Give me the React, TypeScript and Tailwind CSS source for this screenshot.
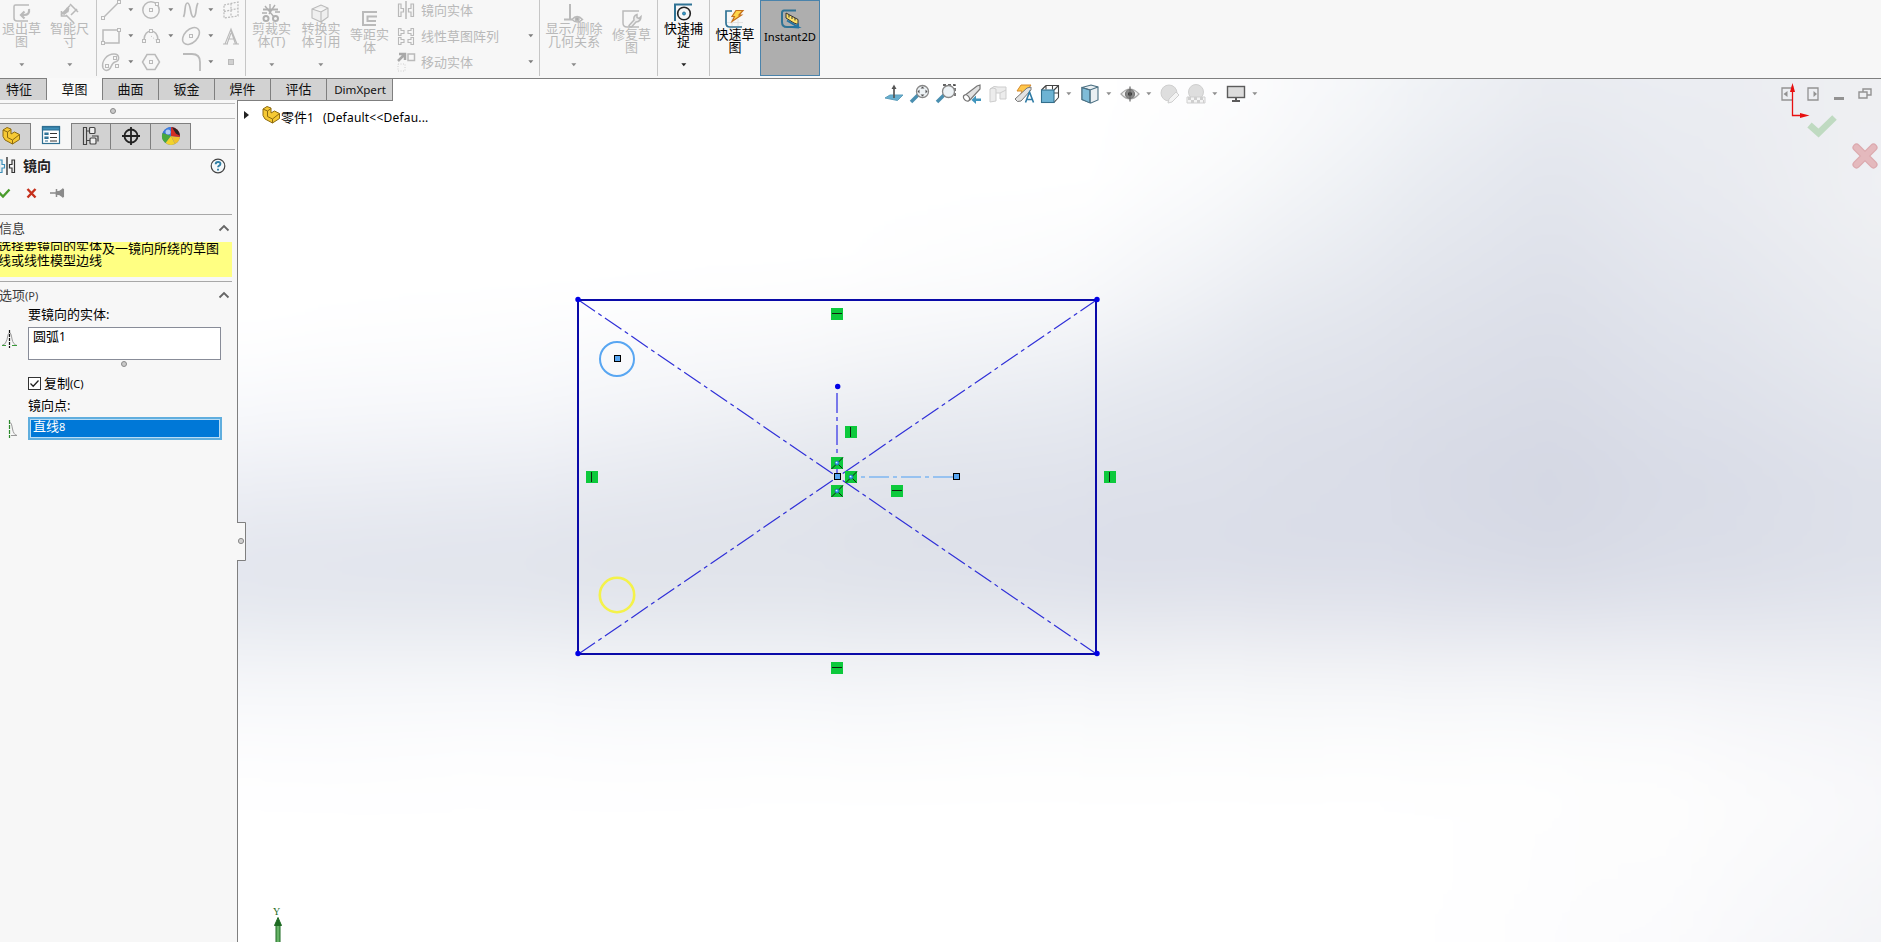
import React from "react";

type Kids = { children?: React.ReactNode };

const Ic = ({ children, w = 20, h = 20, c = "#bababa", sw = 1.5, cls = "" }: Kids & { w?: number; h?: number; c?: string; sw?: number; cls?: string }) => (
  <svg width={w} height={h} viewBox={`0 0 ${w} ${h}`} fill="none" stroke={c} strokeWidth={sw} className={`block shrink-0 overflow-visible ${cls}`}>
    {children}
  </svg>
);

const Arrow = ({ c = "#7d7d7d" }: { c?: string }) => (
  <svg width="6" height="4" viewBox="0 0 6 4" className="block shrink-0">
    <path d="M0.3 0.3h5L2.8 3.3z" fill={c} />
  </svg>
);

const Node = ({ x, y }: { x: number; y: number }) => (
  <rect x={x - 1.5} y={y - 1.5} width="3" height="3" fill="#f7f7f7" strokeWidth="1" />
);

const ExitIcon = () => (
  <Ic><path d="M18 2H4.500q-1.500 0-1.500 1.500v11.500q0 3 3 3H17" /><path d="M18 6q1 6-5 6H10M13.500 8.500L10 12l3.500 3.500" strokeWidth="2.200" /></Ic>
);
const DimIcon = () => (
  <Ic><path d="M2 12L11 2.500M11 1l8 8M7 12l8 8M12 12l6-6M2.500 8v5h5" strokeWidth="1.600" /><path d="M4 11l4-3M9 5l-1 4" strokeWidth="3" /></Ic>
);
const LineIcon = () => <Ic><path d="M3 17L17 3" /><Node x={2} y={18} /><Node x={18} y={2} /></Ic>;
const CircleIcon = () => <Ic><circle cx="10" cy="10" r="8.200" /><Node x={10} y={10} /><Node x={16} y={4} /></Ic>;
const SplineIcon = () => <Ic sw={1.700}><path d="M2.500 17C5 12 3 3 6.500 3S9 17 12.500 17 14 8 17 3" /></Ic>;
const PlaneIcon = () => <Ic sw={1.200}><path d="M3 5l14-3v14L3 18zM10 3.500v13M3 11.500l14-3" strokeDasharray="2 1.300" /></Ic>;
const RectIcon = () => <Ic><rect x="2" y="4" width="16" height="13" /><Node x={2} y={17} /><Node x={18} y={4} /></Ic>;
const ArcIcon = () => <Ic><path d="M3 14C3 2 17 2 17 14" /><path d="M10 10l6 5" strokeDasharray="1 2" strokeWidth="1" /><Node x={3} y={15} /><Node x={17} y={15} /><Node x={10} y={5} /></Ic>;
const EllipseIcon = () => <Ic><ellipse cx="10" cy="10" rx="10" ry="6.500" transform="rotate(-45 10 10)" /><Node x={10} y={10} /></Ic>;
const LetterIcon = () => <Ic sw={1.100}><path d="M2 18h5M12 18h6M4 18l6-15 6 15M10 7l-4 11M7 13h6M10 3v2l4.500 13" /></Ic>;
const SlotIcon = () => <Ic><path d="M2 16C0 9 6 2 13 2c6 0 6 7 1 8-4 1-4 8-7 8-2 1-4 0-5-2z" /><Node x={6} y={14} /><Node x={14} y={6} /><Node x={16} y={14} /></Ic>;
const HexIcon = () => <Ic><path d="M6 2.500h8L18.500 10 14 17.500H6L1.500 10z" /><Node x={10} y={10} /></Ic>;
const FilletIcon = () => <Ic sw={1.800}><path d="M2 2h9q8 0 8 8v9" /></Ic>;
const PointIcon = () => <Ic><rect x="7.500" y="7.500" width="5" height="5" fill="#d0d0d0" strokeWidth="1" /></Ic>;
const TrimIcon = () => (
  <Ic c="#b0b0b0" sw={1.400}><path d="M1 10h5M14 9h5M9 1v8M14 2l-6 9M4 3l9 11" /><circle cx="5" cy="15.500" r="2.500" strokeWidth="2" /><circle cx="14.500" cy="15.500" r="2.500" strokeWidth="2" /><path d="M2 6.500h15" strokeWidth="2" /></Ic>
);
const CubeIcon = () => <Ic sw={1.100}><path d="M2 6l9-4 7 3v9l-7 5-9-4zM2 6l9 3 7-4M11 9v10" fill="#efefef" /></Ic>;
const OffsetIcon = () => <Ic sw={2}><path d="M18 3H4v13h13M18 7.500H8.500V12h8.500" /></Ic>;
const MirrorIcon = ({ c = "#b9b9b9", l = "#b9b9b9", m = "#a8a8a8" }) => (
  <Ic c={c} sw={1.200}><path d="M2.500 4h2.500v4.500h2.500v3.500h-2.500v4.500H2.500z" stroke={l} /><path d="M17.500 4h-2.500v4.500h-2.500v3.500h2.500v4.500h2.500z" /><path d="M10 1v18" stroke={m} strokeWidth="1.200" /></Ic>
);
const PatternIcon = () => (
  <Ic sw={1.100}>
    <path d="M2.500 2.500h2.500v2h3v3h-3v2h-2.500zM17.500 2.500h-2.500v2h-3v3h3v2h2.500zM2.500 11.500h2.500v2h3v3h-3v2h-2.500zM17.500 11.500h-2.500v2h-3v3h3v2h2.500z" />
  </Ic>
);
const MoveIcon = () => (
  <Ic sw={1.500}><path d="M2 9l6-6M3 2h6v6" strokeWidth="2.500" stroke="#a9a9a9" /><rect x="12" y="2" width="6.500" height="6.500" /><path d="M2 12h7v7H2z" strokeDasharray="1 1.500" strokeWidth="1" stroke="#d0d0d0" /></Ic>
);
const RelationIcon = () => (
  <Ic sw={1.500}><path d="M7 1v15M1 16.500h8" strokeWidth="2" /><path d="M9 16.500q5-6 10.500 0-5.500 5-10.500 0z" fill="#f7f7f7" /><circle cx="14.200" cy="16" r="1.800" fill="#aaa" /></Ic>
);
const RepairIcon = () => (
  <Ic sw={1.500}><path d="M18 2H2v12q0 4 4 4h12" /><path d="M8 16.500l5-5.500q-1-4 3-5.500v3l2 1 2-2q0 5-5 5.500l-4.500 5q-2.500 0-2.500-1.500z" fill="#eee" /></Ic>
);
const SnapIcon = () => (
  <Ic c="#2f7395" sw={2}><path d="M2 18V1.500H19" /><circle cx="11" cy="10.500" r="6.300" stroke="#222" strokeWidth="1.600" /><circle cx="11" cy="10.500" r="1.500" fill="#2f9bd0" strokeWidth="1" /></Ic>
);
const RapidIcon = () => (
  <Ic c="#2f7395" sw={1.700}><path d="M8 8v12M14 10v10M3 13.500h16" stroke="#ddd" strokeWidth=".8" /><path d="M8 2H2v12q0 4 4 4h12" /><path d="M12 1.500h7l-4 4.500h2.500L8 12.500l2.500-5H8z" fill="#ffd54a" stroke="#c5701c" strokeWidth="1.200" /></Ic>
);
const InstantIcon = () => (
  <Ic c="#2f7395" sw={2}><path d="M16 1.500H4Q2 1.500 2 4v9q0 5 5 5h5" /><path d="M6 4l12 6.500v5l-4-1.500-8-5z" fill="#ffe266" stroke="#333" strokeWidth="1" /><path d="M9 6v2.500M12 7.500v2.500M15 9v2.500" stroke="#333" strokeWidth="1" /><path d="M7 11.500l11 6.500h-6l6 .5v-4" stroke="#2474a0" /></Ic>
);

const Big = ({ icon, a, b, arrow, low, dark, cls }: { icon: React.ReactNode; a: string; b: string; arrow?: boolean; low?: boolean; dark?: boolean; cls: string }) => (
  <div className={`flex h-[76px] shrink-0 flex-col items-center ${low ? "pt-[9px]" : "pt-[3px]"} ${dark ? "text-black" : "text-[#b9b9b9]"} ${cls}`}>
    <div className="-ml-[2px]">{icon}</div>
    <div className="-mt-px flex flex-col items-center whitespace-nowrap text-[13px] leading-[13px]">
      <span>{a}</span>
      <span>{b}</span>
    </div>
    {arrow && <div className="mt-[15px]"><Arrow c={dark ? "#222" : "#8a8a8a"} /></div>}
  </div>
);

const Sep = () => <div className="h-[76px] w-px shrink-0 bg-[#c6c6c6]" />;

const sketchTools = [
  [LineIcon, true], [CircleIcon, true], [SplineIcon, true], [PlaneIcon, false],
  [RectIcon, true], [ArcIcon, true], [EllipseIcon, true], [LetterIcon, false],
  [SlotIcon, true], [HexIcon, false], [FilletIcon, true], [PointIcon, false],
] as [React.FC, boolean][];

const ListRow = ({ icon, label, arrow }: { icon: React.ReactNode; label: string; arrow?: boolean }) => (
  <div className="flex h-[26px] items-center text-[13px] text-[#b9b9b9]">
    {icon}
    <span className="ml-[5px] flex-1 whitespace-nowrap leading-none">{label}</span>
    {arrow && <Arrow />}
  </div>
);

const Ribbon = () => (
  <header className="flex h-[79px] shrink-0 items-start border-b border-[#7f7f7f] bg-[#f7f7f7]">
    <Big icon={<ExitIcon />} a="退出草" b="图" arrow cls="w-[43px]" />
    <Big icon={<DimIcon />} a="智能尺" b="寸" arrow cls="w-[53px]" />
    <Sep />
    <div className="-mt-[3px] grid w-[148px] shrink-0 grid-cols-[40px_40px_40px_28px] grid-rows-[26px_26px_26px] pl-[4px]">
      {sketchTools.map(([I, arrow], i) => (
        <div key={i} className="flex items-center gap-[7px]"><I />{arrow && <Arrow />}</div>
      ))}
    </div>
    <Sep />
    <Big icon={<TrimIcon />} a="剪裁实" b="体(T)" arrow cls="w-[51px]" />
    <Big icon={<CubeIcon />} a="转换实" b="体引用" arrow cls="w-[48px]" />
    <Big icon={<OffsetIcon />} a="等距实" b="体" low cls="w-[49px]" />
    <div className="-mt-[3px] flex w-[145px] shrink-0 flex-col pl-[2px] pr-[5px]">
      <ListRow icon={<MirrorIcon />} label="镜向实体" />
      <ListRow icon={<PatternIcon />} label="线性草图阵列" arrow />
      <ListRow icon={<MoveIcon />} label="移动实体" arrow />
    </div>
    <Sep />
    <Big icon={<RelationIcon />} a="显示/删除" b="几何关系" arrow cls="w-[68px]" />
    <Big icon={<RepairIcon />} a="修复草" b="图" low cls="w-[49px] pr-[2px]" />
    <Sep />
    <Big icon={<SnapIcon />} a="快速捕" b="捉" arrow dark cls="w-[51px]" />
    <Sep />
    <Big icon={<RapidIcon />} a="快速草" b="图" low dark cls="w-[50px]" />
    <div className="flex h-[76px] w-[60px] shrink-0 flex-col items-center border border-[#4a83ab] bg-[#aeaeae] pt-[8px] text-[11.200px] text-black">
      <InstantIcon />
      <span className="mt-px leading-[13px]">Instant2D</span>
    </div>
  </header>
);

const tabs = [
  ["特征", "w-[47px] pr-[8px]", false], ["草图", "w-[56px]", true], ["曲面", "w-[56px]", false], ["钣金", "w-[56px]", false],
  ["焊件", "w-[56px]", false], ["评估", "w-[56px]", false], ["DimXpert", "w-[66px] pl-[1px]", false],
] as [string, string, boolean][];

const TabStrip = () => (
  <nav className="-mt-px flex h-[23px] shrink-0">
    {tabs.map(([t, w, on]) => (
      <div key={t} className={`flex shrink-0 items-center justify-center border-r border-[#7f7f7f] leading-none ${t === "DimXpert" ? "text-[11.600px]" : "text-[13px]"} ${w} ${on ? "bg-[#f9f9f9]" : "border-y bg-[#d2d2d2]"} text-[#111]`}>{t}</div>
    ))}
  </nav>
);

const PartIcon = () => (
  <Ic c="#8d6b10" sw={1}><path d="M2 4l4-2.500 4 1.500v5l3.500-2 5 2.500v5L11.500 18 4 14 2 10.500z" fill="#f6c934" strokeLinejoin="round" /><path d="M2 4l4.500 2L10 3.500M6.500 6v5.500l5 2.500 7-5.500M11.500 14v4" /></Ic>
);
const PropIcon = () => (
  <Ic c="#2e6f92" sw={1.200}><rect x="1.500" y="1.500" width="17" height="17" fill="#fff" /><path d="M1.500 2h17v3h-17z" fill="#3d8fb8" /><path d="M4 8h3v1.500H4zM4 12h3v1.500H4zM4 16h3" fill="#3d8fb8" /><path d="M9 8.500h7M9 12.500h7M9 16h7" stroke="#333" /></Ic>
);
const ConfigIcon = () => (
  <Ic c="#444" sw={1.200}><path d="M2.500 1.500h3v17h-3zM5.500 5h3M5.500 14.500h4" fill="#ddd" /><rect x="8.500" y="1.500" width="5.500" height="6" rx="1" fill="#eee" /><rect x="9" y="12" width="6" height="6" rx="1" fill="#eee" /><path d="M11 10h6v5.500" /></Ic>
);
const TargetIcon = () => <Ic c="#222" sw={1.800}><circle cx="10" cy="10" r="6.500" /><path d="M10 1v18M1 10h18" /></Ic>;
const BallIcon = () => (
  <Ic sw={0}><circle cx="10" cy="10" r="9" fill="#3b6fd0" /><path d="M10 10L2 6A9 9 0 0 1 12 1.200z" fill="#3f7ddd" /><path d="M10 10L1.500 7a9 9 0 0 0 3 10z" fill="#49a83c" /><path d="M10 10L4.500 17A9 9 0 0 0 14 18z" fill="#f2d32c" /><path d="M10 10l4 8a9 9 0 0 0 5-7z" fill="#f0c02c" /><path d="M10 10l9 1A9 9 0 0 0 10 1z" fill="#d32d24" /><path d="M11 1.200q7 1 8 8.500l-4-2z" fill="#2b2424" /><circle cx="7" cy="6" r="2.500" fill="#fff" opacity=".6" /></Ic>
);

const MTab = ({ children, cls }: Kids & { cls: string }) => (
  <div className={`flex h-[26px] items-center justify-center border-[#7f7f7f] pb-[2px] ${cls}`}>{children}</div>
);

const Dot = () => <div className="size-[6px] rounded-full border border-[#8a8a8a] bg-[#c9c9c9]" />;

const Chevron = () => <Ic w={12} h={8} c="#666" sw={1.800} cls="-mt-px"><path d="M1.500 6.500L6 2l4.500 4.500" /></Ic>;

const BellIcon = () => (
  <Ic w={16} h={18} c="#999" sw={1}><path d="M0 15.500q4-1 5-6Q6 3 7.500 2.500" /><path d="M7.500 2.500q1.500 0 2.500 6.500 1 5.500 5 6.500" /><path d="M7.500 0v18" stroke="#111" strokeWidth="1.200" strokeDasharray="3 1" /><path d="M0 15.500h4M10 15.500h5" stroke="#3a9a3a" /></Ic>
);
const HalfBellIcon = () => (
  <Ic w={16} h={18} c="#999" sw={1}><path d="M7.500 0v18" stroke="#2a8a2a" strokeWidth="1.200" strokeDasharray="4 1" /><path d="M8 2.500q1.500 0 2.500 6.500 1 5.500 4.500 6.500H9" /></Ic>
);

const PropertyPanel = () => (
  <aside className="flex w-[238px] shrink-0 flex-col border-r border-[#7f7f7f] bg-[#f7f7f7] text-[13px] text-black">
    <div className="mr-[2px] mt-[3px] flex h-[16px] items-center justify-center border-y border-[#bdbdbd] pr-[9px]"><Dot /></div>
    <div className="mr-[2px] mt-[4px] flex border-b border-[#a8a8a8]">
      <MTab cls="w-[31px] border-r border-t bg-[#d2d2d2] pr-[8px]"><PartIcon /></MTab>
      <MTab cls="w-[40px] bg-[#f7f7f7] -mb-px"><PropIcon /></MTab>
      <MTab cls="w-[40px] border-x border-t bg-[#d2d2d2]"><ConfigIcon /></MTab>
      <MTab cls="w-[40px] border-r border-t bg-[#d2d2d2]"><TargetIcon /></MTab>
      <MTab cls="w-[40px] border-r border-t bg-[#d2d2d2]"><BallIcon /></MTab>
    </div>
    <div className="flex h-[33px] items-center pb-[2px]">
      <div className="-ml-[3px]"><MirrorIcon c="#333" l="#3d8fb8" m="#111" /></div>
      <h2 className="ml-[6px] flex-1 text-[14px] font-bold leading-none text-[#222]">镜向</h2>
      <Ic w={16} h={16} c="#444" sw={1.200} cls="mr-[11px] mt-px"><circle cx="8" cy="8" r="6.800" fill="#f4f8fa" /><path d="M5.700 6.300q0-2.300 2.400-2.300t2.300 2q0 1.200-1.500 1.900-.8.400-.8 1.400" stroke="#2f7fa5" strokeWidth="1.900" /><path d="M8 10.700v1.700" stroke="#2f7fa5" strokeWidth="1.900" /></Ic>
    </div>
    <div className="mr-[5px] flex h-[32px] items-center border-b border-[#a8a8a8] pb-[11px]">
      <Ic w={10} h={10} c="#4a9c2d" sw={2.400}><path d="M-1 4.500l4 4L9.500 1.500" /></Ic>
      <Ic w={10} h={10} c="#c6301c" sw={2.400} cls="ml-[17px]"><path d="M.5 1l8 8.500M8.500 1l-8 8.500" /></Ic>
      <Ic w={14} h={10} c="#8b8b8b" sw={1.500} cls="ml-[13px]"><path d="M0 5h6M6.500 1v8" /><path d="M6.500 4Q10 4 12.500 1.500v7Q10 6 6.500 6z" fill="#8b8b8b" /><path d="M13.300 1v8" /></Ic>
    </div>
    <div className="mr-[5px] flex h-[27px] items-center justify-between pb-px pr-[2px] text-[#3c3c3c]"><span className="-ml-px leading-none">信息</span><Chevron /></div>
    <div className="mr-[5px] h-[35px] overflow-hidden whitespace-nowrap bg-[#ffff82] text-[13px] leading-[13px]">
      <div className="-ml-[2px] flex h-[13px]">
        <span className="flex h-[9px] items-center overflow-hidden">选择要镜向的实体</span>
        <span>及一镜向所绕的草图</span>
      </div>
      <div className="-ml-[2px] -mt-px">线或线性模型边线</div>
    </div>
    <div className="mr-[5px] mt-[4px] h-px bg-[#a8a8a8]" />
    <div className="mr-[5px] flex h-[27px] items-center justify-between pb-px pr-[2px] text-[#3c3c3c]"><span className="-ml-px leading-none">选项<span className="text-[11px]">(P)</span></span><Chevron /></div>
    <div className="-mt-px ml-[28px] h-[19px] leading-[13px]">要镜向的实体:</div>
    <div className="flex">
      <div className="w-[28px] pl-[2px] pt-[3px]"><BellIcon /></div>
      <div className="h-[33px] w-[193px] border border-[#888c98] bg-white pl-[4px] pt-[2px] leading-[13px]">圆弧<span className="text-[12px]">1</span></div>
    </div>
    <div className="ml-[121px] mt-[1px]"><Dot /></div>
    <div className="ml-[28px] mt-[9px] flex h-[14px] items-center">
      <div className="flex size-[13px] items-center justify-center border border-[#333] bg-white"><Ic w={11} h={11} c="#222" sw={1.300}><path d="M1.500 5.500L4.200 8.200 9.500 2.500" /></Ic></div>
      <span className="ml-[3px] leading-none">复制<span className="text-[11px]">(C)</span></span>
    </div>
    <div className="ml-[28px] mt-[9px] h-[18px] leading-[13px]">镜向点:</div>
    <div className="flex">
      <div className="w-[28px] pl-[2px] pt-[3px]"><HalfBellIcon /></div>
      <div className="h-[23px] w-[194px] border-2 border-[#60aede] bg-[#b9dcf5] p-px">
        <div className="h-full bg-[#0078d7] pl-[2px] leading-[12px] text-white">直线<span className="text-[11px]">8</span></div>
      </div>
    </div>
  </aside>
);

const Lens = () => <><path d="M1 18l7-7" stroke="#4a8fb0" strokeWidth="3.500" /><circle cx="12.500" cy="7.500" r="6" fill="#eef3f6" stroke="#888" strokeWidth="1.300" /></>;

const viewTools: [React.ReactNode, string][] = [
  [<Ic sw={1}><path d="M1 14l5-3h13l-5.500 5.500z" fill="#67afd0" stroke="#5f9fbc" /><path d="M10 14V4" stroke="#555" strokeWidth="1.700" /><path d="M7.500 5L10 .5 12.500 5z" fill="#555" stroke="none" /></Ic>, ""],
  [<Ic><Lens /><path d="M12.500 2.500l2 2h-4zM12.500 12.500l2-2h-4zM7.500 7.500l2-2v4zM17.500 7.500l-2-2v4z" fill="#555" stroke="none" /></Ic>, ""],
  [<Ic><path d="M7 1h12v12" stroke="#333" strokeDasharray="3 2" strokeWidth="1.300" /><Lens /></Ic>, ""],
  [<Ic c="#777" sw={1.200}><path d="M2 12L15 2l3-1v4L8 16q-4 2-6-4z" fill="#e2e2e2" /><ellipse cx="4.500" cy="14" rx="2.500" ry="3.500" transform="rotate(-40 4.500 14)" fill="#fff" /><path d="M19 14.500h-5v-3l-4.500 4.500 4.500 4v-3h5z" fill="#4095bd" stroke="none" /></Ic>, ""],
  [<Ic c="#cdcdcd" sw={1}><path d="M2 5q4-4 8-2h8v12h-6V9H8v8l-6 1z" fill="#ececec" /><path d="M8 9V5q-3-2-6 0M12 9l6-3" /></Ic>, ""],
  [<Ic c="#777" sw={1}><path d="M7 1h10l-4 5h3L6 12l2-5H3z" fill="#ffc64a" stroke="#d58a2c" /><path d="M1 15L13 4l4-1v3L7 17q-4 2-6-2z" fill="#e2e2e2" /><path d="M11.500 18.500l4-10.500L19.500 18.500M13 15.500h5" stroke="#2f7ba5" strokeWidth="1.600" /></Ic>, ""],
  [<Ic c="#444" sw={1.100}><path d="M6 1.500h12.500v12M18.500 1.500L14 6M6 1.500L1.500 6M6 1.500v4M12.500 1.500v4M14 9h4.500M18.500 13.500l-4.500 5" /><rect x="1.500" y="6" width="12.500" height="12.500" fill="#6db3d3" stroke="#336f8c" /></Ic>, "y"],
  [<Ic c="#4a6f82" sw={1.100}><path d="M2 3.500l9-2.500 7 2v13l-7 3-9-3.500z" fill="#e9eff2" /><path d="M2 3.500l8 2.500v13l-8-3.500z" fill="#7fbcd8" /><path d="M2 3.500l8 2.500 8-3M10 6v13" /></Ic>, "y"],
  [<Ic c="#aaa" sw={1.200}><path d="M1 10q9-10 18 0-9 10-18 0z" fill="#f0f0f0" /><circle cx="10" cy="10" r="4.500" fill="#888" stroke="#777" /><circle cx="10" cy="10" r="2" fill="#333" stroke="none" /><path d="M10 2.500v15" stroke="#666" /></Ic>, "y"],
  [<Ic c="#cfcfcf" sw={1}><circle cx="9" cy="9" r="8" fill="#dedede" /><path d="M8 19l1-4 7-7 3 3-7 7z" fill="#f4f4f4" /></Ic>, ""],
  [<Ic c="#cfcfcf" sw={1}><circle cx="10" cy="8" r="7.500" fill="#dedede" /><path d="M1 13h18v6H1z" fill="#f4f4f4" /><path d="M2 14.500h16M5 17.500h13" strokeWidth="3" strokeDasharray="3 3" /></Ic>, "y"],
  [<Ic c="#5b5b5b" sw={1.400}><rect x="1.500" y="2.500" width="17" height="11" fill="#dcdcdc" /><path d="M10 14v3M6 17h8" strokeWidth="2" /></Ic>, "y"],
];

const ViewToolbar = () => (
  <div className="flex h-[30px] items-center">
    {viewTools.map(([icon, menu], i) => (
      <div key={i} className={`flex items-center ${menu ? "mr-[8px] w-[32px] gap-[6px]" : "w-[26px]"}`}>{icon}{menu && <Arrow c="#8f8f8f" />}</div>
    ))}
  </div>
);

const WindowButtons = () => (
  <div className="flex h-[30px] w-[100px] items-start pt-[8px]">
    <Ic w={12} h={14} c="#929292" sw={1.300}><path d="M12 1H1v12h11" /><path d="M6.500 4v6L2.500 7z" fill="#929292" stroke="none" /></Ic>
    <Ic w={12} h={14} c="#929292" sw={1.300} cls="ml-[14px]"><path d="M1 1h10v12H1z" /><path d="M6.500 4v6L10 7z" fill="#929292" stroke="none" /></Ic>
    <div className="ml-[15px] mt-[10px] h-[3px] w-[10px] bg-[#929292]" />
    <Ic w={14} h={12} c="#929292" sw={1.400} cls="ml-[14px] mt-[1px]"><path d="M5 4V1h8v6H9" /><path d="M1 4h8v6H1z" /></Ic>
  </div>
);

/* Vertical colour profiles of the viewport backdrop ("y:colour"), cross-faded from left to right. */
const profiles: [number, string][] = [
  [238, "330:#fff 420:#f7f8fb 490:#eceef4 560:#e3e6ee 600:#e5e8ef 650:#eff1f5 700:#f8f9fb 760:#fdfdfe 830:#fff"],
  [560, "290:#fff 400:#f6f7fa 470:#ebedf3 545:#e1e4ec 595:#e2e5ec 650:#eef0f4 700:#f8f9fb 760:#fdfdfe 830:#fff"],
  [830, "270:#fff 370:#f4f5f8 450:#e5e8ee 530:#dfe2ea 590:#e1e4eb 655:#eef0f4 710:#f8f9fb 780:#fefefe 830:#fff"],
  [1090, "190:#fff 300:#f7f8fa 390:#e8ebf1 480:#dfe2eb 560:#dbdee9 605:#e2e5ec 655:#eff0f4 710:#f9fafb 780:#fefefe 830:#fff"],
  [1250, "100:#fcfcfd 160:#f9fafb 260:#eff1f5 340:#e5e8ef 430:#dee1ea 550:#dadde8 605:#e2e4ec 655:#eff0f4 710:#f9fafb 780:#fefefe 830:#fff"],
  [1400, "95:#f2f4f7 190:#eaedf2 330:#e0e3eb 460:#d9dce7 560:#dadde8 615:#e3e5ed 660:#eff0f4 715:#f9fafb 780:#fefefe 830:#fff"],
  [1540, "85:#eaecf1 150:#e4e7ee 330:#dbdee8 490:#d4d7e3 570:#d8dbe6 620:#e3e5ed 665:#f0f1f5 720:#f9fafb 780:#fefefe 942:#fdfdfe"],
  [1700, "85:#ebedf2 200:#e8eaf0 330:#e1e4ec 480:#d9dce7 570:#dbdee8 620:#e4e6ee 670:#f0f1f5 730:#f9f9fb 800:#fdfdfd 942:#fafafc"],
  [1881, "85:#eeeff2 200:#eff0f3 330:#e9ebf0 480:#dee1ea 570:#dee1ea 640:#e8eaf0 700:#f2f3f7 800:#f8f8fa 942:#f3f4f7"],
];

/* The blurred layers reach 100px past the window so that their edges stay outside it. */
const Backdrop = () => (
  <div className="absolute -inset-[100px] blur-[24px]">
    {profiles.map(([x, spec], i) => {
      const stops = spec.split(" ").map((s) => s.split(":")).map(([y, c]) => `${c} ${Number(y) + 100}px`).join(",");
      const mask = i === 0 ? undefined : `linear-gradient(to right, transparent ${profiles[i - 1][0] + 100}px, black ${x + 100}px)`;
      return <div key={x} className="absolute inset-0" style={{ backgroundImage: `linear-gradient(to bottom, ${stops})`, maskImage: mask }} />;
    })}
  </div>
);

const Rel = ({ x, y, k }: { x: number; y: number; k: "h" | "v" | "d" }) => (
  <g transform={`translate(${x} ${y})`}>
    <rect x="-6" y="-6" width="12" height="12" fill="#0dc93c" />
    {k === "h" && <path d="M-5 -.5H5" stroke="#10240f" />}
    {k === "v" && <path d="M-.5 -5V5" stroke="#10240f" />}
    {k === "d" && <><path d="M-5.500 6L6 -5.500M1 1l4.500 4.500" stroke="#10240f" /><circle r="2" fill="#3fa9f5" stroke="#1b62b8" strokeWidth=".7" /><circle cx="-.5" cy="-.5" r=".8" fill="#e6f6ff" /></>}
  </g>
);

const Handle = ({ x, y }: { x: number; y: number }) => <rect x={x - 3} y={y - 3} width="6" height="6" fill="#58a6f2" stroke="#000" />;

const SketchCanvas = () => (
  <svg width="1881" height="942" viewBox="0 0 1881 942" fill="none" className="pointer-events-none absolute left-0 top-0">
    <path d="M578.500 300L1096.500 654M578.500 654L1096.500 300" stroke="#3030d8" strokeWidth="1.200" strokeDasharray="20 4 4 4" />
    <rect x="578" y="300" width="518" height="354" stroke="#0a0aa8" strokeWidth="2" />
    {[[578, 299.500], [1097, 299.500], [578, 653.500], [1097, 653.500]].map(([x, y]) => <circle key={`${x}-${y}`} cx={x} cy={y} r="2.700" fill="#0000e6" />)}
    <path d="M837 393V474" stroke="#7878ea" strokeWidth="2" strokeDasharray="20 4 4 4" />
    <circle cx="837.700" cy="386.500" r="2.700" fill="#0000e6" />
    <path d="M861 477H955" stroke="#97c2f0" strokeWidth="2" strokeDasharray="4 4 20 4" />
    <circle cx="617" cy="359" r="17" stroke="#58a6f2" strokeWidth="2" />
    <Handle x={617.500} y={358.500} />
    <circle cx="617" cy="595" r="17.200" stroke="#f4f24a" strokeWidth="2.600" />
    <Rel x={837} y={314} k="h" />
    <Rel x={837} y={668} k="h" />
    <Rel x={592} y={477} k="v" />
    <Rel x={1110} y={477} k="v" />
    <Rel x={851} y={432} k="v" />
    <Rel x={897} y={491} k="h" />
    <Rel x={837} y={463} k="d" />
    <Rel x={851} y={477} k="d" />
    <Rel x={837} y={491} k="d" />
    <Handle x={837.500} y={476.500} />
    <Handle x={956.500} y={476.500} />
    <path d="M237 522.500H245.500V560.500H237" fill="#f7f7f7" stroke="#7f7f7f" />
    <circle cx="241" cy="541" r="2.600" fill="#cfcfcf" stroke="#8a8a8a" />
    <path d="M276 942V925H280V942" fill="#66b266" stroke="#1d6b22" />
    <path d="M278 917.500L281.500 925.500H274.500z" fill="#1d6b22" stroke="#1d6b22" />
    <text x="273" y="915" className="font-['Liberation_Serif',serif] text-[10px]" fill="#1d6b22">Y</text>
    <path d="M1792.500 86V115.500H1802" stroke="#e81010" strokeWidth="1.300" />
    <path d="M1792.500 83L1795 92H1790zM1809.500 115.500L1800 113V118z" fill="#e81010" />
    <path d="M1809.500 125L1818.500 133 1834.500 117.500" stroke="#bfdac1" strokeWidth="6.500" />
    <path d="M1856.500 147.500L1873.500 164.500M1873.500 147.500L1856.500 164.500" stroke="#dba9ae" strokeWidth="8" strokeLinecap="round" />
    <path d="M1856.500 147.500L1873.500 164.500M1873.500 147.500L1856.500 164.500" stroke="#e4b9bd" strokeWidth="5.500" strokeLinecap="round" />
  </svg>
);

export default function App() {
  return (
    <div className="relative flex h-[942px] w-[1881px] flex-col overflow-hidden bg-white font-['Noto_Sans','Noto_Sans_CJK_SC',sans-serif]">
      <Backdrop />
      <div className="relative"><Ribbon /></div>
      <div className="relative flex h-[21px] shrink-0 items-start">
        <div className="h-[21px] w-[238px] shrink-0 bg-[#f7f7f7]"><TabStrip /></div>
        <div className="ml-[646px] flex flex-1 items-start justify-between">
          <ViewToolbar />
          <WindowButtons />
        </div>
      </div>
      <div className="relative -z-0 flex flex-1">
        <PropertyPanel />
        <main className="flex flex-1 items-start pl-[6px] pt-[6px]">
          <div className="flex h-[20px] items-center text-[13px] text-black">
            <svg width="5" height="8" viewBox="0 0 5 8" className="mb-[3px]"><path d="M0 0l5 4-5 4z" fill="#222" /></svg>
            <span className="mb-[2px] ml-[12px]"><PartIcon /></span>
            <span className="mt-[2px] whitespace-nowrap leading-none">零件<span className="text-[12px]">1</span></span>
            <span className="ml-[9px] mt-[3px] whitespace-nowrap text-[12px] leading-none tracking-[0.2px]">(Default&lt;&lt;Defau...</span>
          </div>
        </main>
      </div>
      <SketchCanvas />
    </div>
  );
}
